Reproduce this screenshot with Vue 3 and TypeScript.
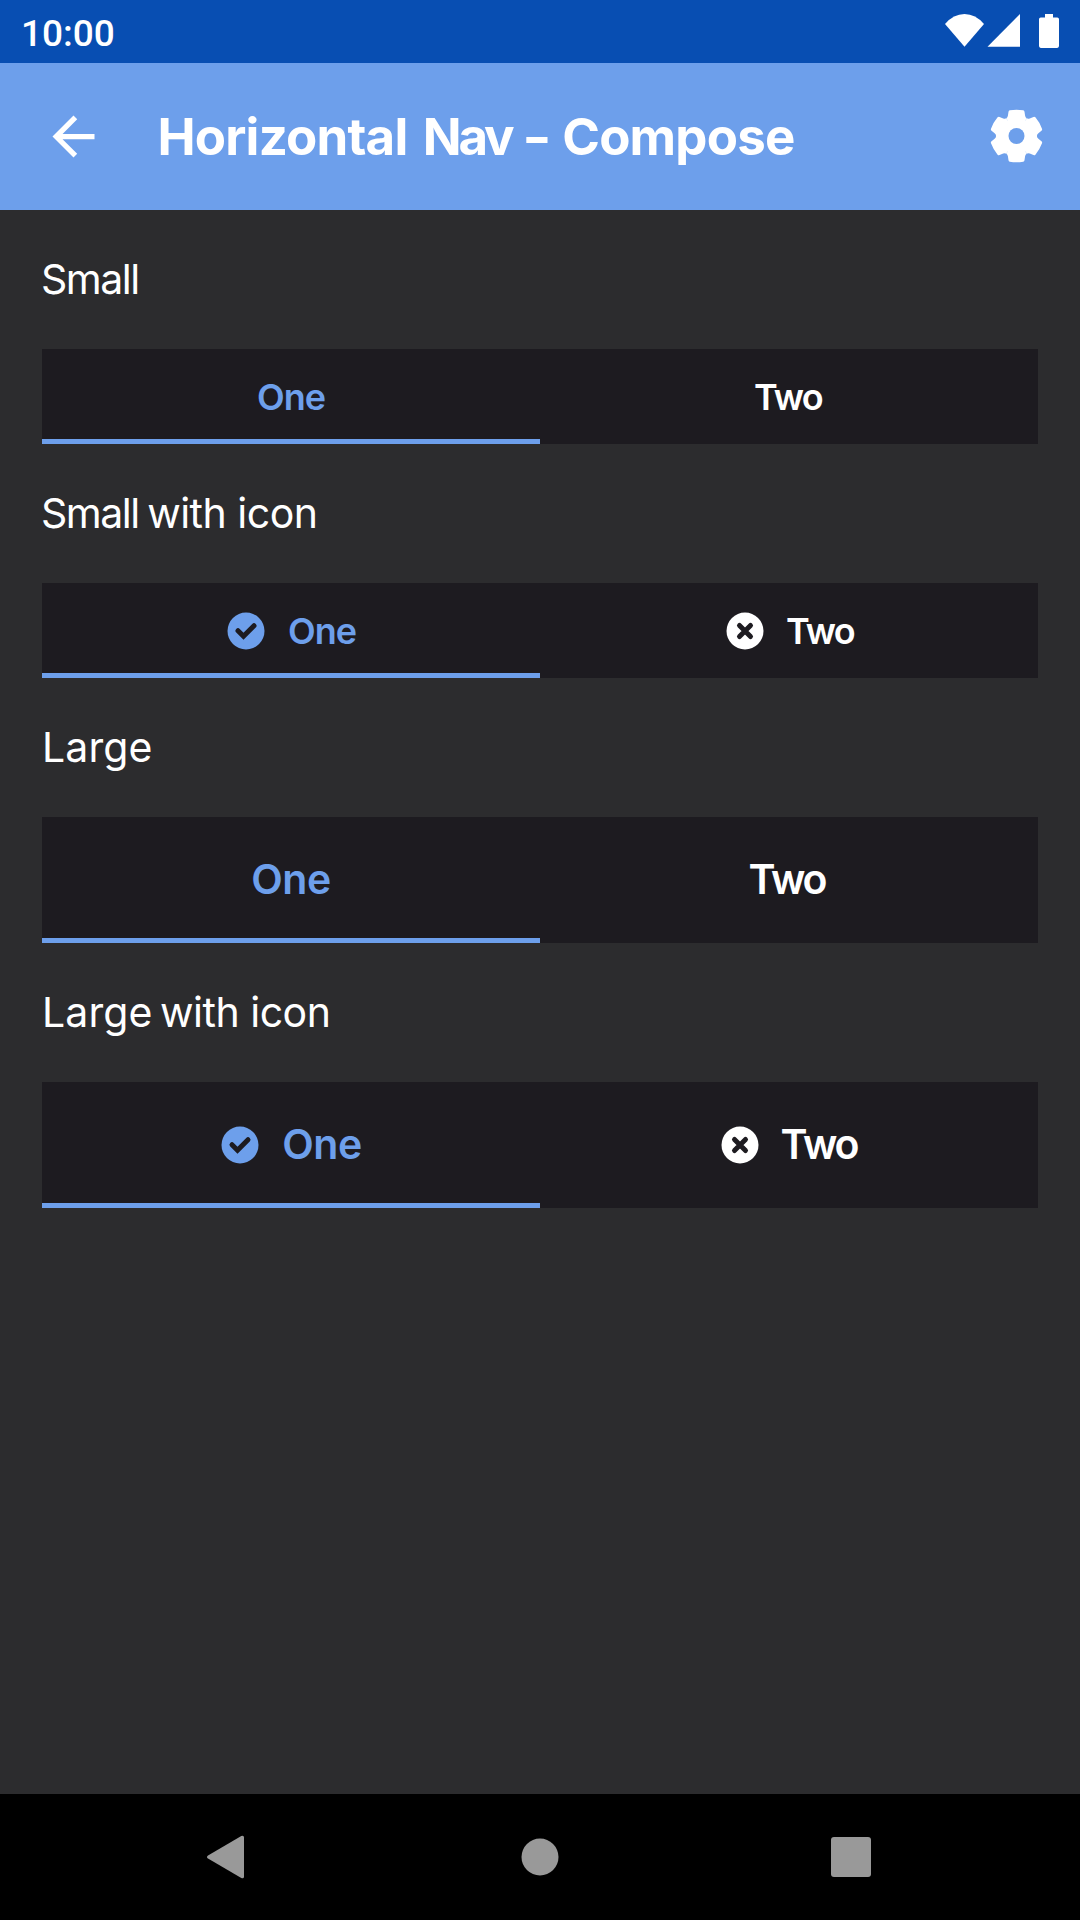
<script setup lang="ts">
interface Section {
  size: 'Small' | 'Large'
  icons: boolean
}

const sections: Section[] = [
  { size: 'Small', icons: false },
  { size: 'Small', icons: true },
  { size: 'Large', icons: false },
  { size: 'Large', icons: true },
]

const gearAngles = [0, 60, 120, 180, 240, 300]
const tooth =
  'M-10.2-17.7Q-8.9-18.4-8.6-20.3L-8-24.2Q-7.8-25.4-6.7-25.7Q0-26.9 6.7-25.7Q7.8-25.4 8-24.2L8.6-20.3Q8.9-18.4 10.2-17.7L0 0Z'
</script>

<template>
  <div class="screen">
    <header class="status">
      <span class="clock">10:00</span>
      <svg class="indicators" width="116" height="36" viewBox="944 13 116 36" fill="#fff">
        <path d="M964.5 46.7L945 24Q953.5 14 964.5 14T984 24Z" />
        <path d="M987.5 46.7H1020V14Z" />
        <path d="M1045 14h8v3.5h4.2q1.8 0 1.8 1.8v26.8q0 1.8-1.8 1.8h-16.4q-1.8 0-1.8-1.8V19.300q0-1.800 1.800-1.800h4.200z" />
      </svg>
    </header>

    <div class="appbar">
      <svg width="63" height="63" viewBox="0 0 24 24" fill="#fff">
        <path d="M20 11H7.830l5.590-5.590L12 4l-8 8 8 8 1.410-1.410L7.830 13H20v-2z" />
      </svg>
      <h1>Horizontal <span class="nav">Nav</span> <span class="dash">-</span> Compose</h1>
      <svg class="gear" width="54" height="54" viewBox="-26.500 -27 54 54" fill="#fff">
        <path v-for="a in gearAngles" :key="a" :d="tooth" :transform="`rotate(${a})`" />
        <circle r="18" />
        <circle r="8" fill="#6d9feb" />
      </svg>
    </div>

    <main>
      <section v-for="s in sections" :key="s.size + s.icons">
        <h2>
          <span :class="s.size.toLowerCase()">{{ s.size }}</span>
          <template v-if="s.icons"> with icon</template>
        </h2>
        <div class="tabs" :class="{ tall: s.size === 'Large' }">
          <div class="tab active">
            <svg v-if="s.icons" width="42" height="42" viewBox="-21 -21 42 42">
              <circle r="18.500" fill="#6d9feb" />
              <path class="mark" d="M-8-.3L-2.500 5.200 8-5.300" />
            </svg>
            <span class="one">One</span>
          </div>
          <div class="tab second">
            <svg v-if="s.icons" width="42" height="42" viewBox="-21 -21 42 42">
              <circle r="18.500" fill="#fff" />
              <path class="mark" d="M-5.500-5.500l11 11M5.500-5.500l-11 11" />
            </svg>
            <span class="two">Two</span>
          </div>
        </div>
      </section>
    </main>

    <nav class="system">
      <svg width="42" height="46" viewBox="205 1834 42 46" fill="#999">
        <path d="M208 1855.400L241.300 1836q2.700-1 2.700 1.600v38.800q0 2.600-2.700 1.600L208 1858.600q-2-1.600 0-3.200z" />
      </svg>
      <svg class="home" width="38" height="38" viewBox="-19 -19 38 38" fill="#999"><circle r="18.500" /></svg>
      <svg width="40" height="40" viewBox="0 0 40 40" fill="#999"><rect width="40" height="40" rx="3" /></svg>
    </nav>
  </div>
</template>

<style>
body {
  margin: 0;
  background: #2c2c2e;
}
</style>

<style scoped>
.screen {
  display: flex;
  flex-direction: column;
  width: 1080px;
  height: 1920px;
  overflow: hidden;
  background: #2c2c2e;
  color: #fff;
  font-family: Inter, "Liberation Sans", sans-serif;
}
svg {
  display: block;
  flex: none;
}
.status {
  display: flex;
  align-items: center;
  justify-content: space-between;
  box-sizing: border-box;
  height: 63px;
  padding: 0 20px 0 21px;
  background: #084eb2;
}
.indicators {
  margin-bottom: 1px;
}
.clock {
  font: 500 37px/63px Roboto, sans-serif;
  padding-top: 3px;
}
.appbar {
  display: flex;
  align-items: center;
  box-sizing: border-box;
  height: 147px;
  padding: 0 36px 0 42px;
  background: #6d9feb;
}
h1 {
  flex: 1;
  margin: 0 0 0 52.5px;
  font-size: 51px;
  font-weight: 650;
  line-height: 147px;
  letter-spacing: -0.8px;
  white-space: nowrap;
}
.nav {
  margin: 0 1.5px 0 4px;
  letter-spacing: -3.1px;
}
.dash {
  display: inline-block;
  margin: 0 3px 0 0.5px;
  transform: scaleX(1.25);
}
.gear {
  margin-bottom: 2px;
}
main {
  flex: 1;
  padding: 0 42px;
}
h2 {
  margin: 0;
  font-size: 41px;
  font-weight: 400;
  line-height: 139px;
  letter-spacing: -0.5px;
  white-space: nowrap;
}
.small {
  margin: 0 -2.5px 0 -1px;
  letter-spacing: -1.5px;
}
.large {
  margin-right: -3.5px;
  letter-spacing: 0.1px;
}
.tabs {
  display: flex;
  height: 95px;
  background: #1d1b20;
  font-size: 36px;
  font-weight: 600;
}
.tab {
  display: flex;
  flex: 1 1 0;
  align-items: center;
  justify-content: center;
  box-sizing: border-box;
  width: 498px;
  gap: 21px;
}
.second {
  gap: 20px;
}
.active {
  color: #6d9feb;
  box-shadow: inset 0 -5px #6d9feb;
}
.one {
  letter-spacing: -1px;
}
.one:not(:only-child) {
  margin-right: 1px;
}
.two {
  letter-spacing: -1.7px;
}
.two:only-child {
  margin-right: 2px;
}
.tall {
  height: 126px;
  font-size: 41px;
}
.tall .one {
  padding-bottom: 2px;
  letter-spacing: -0.5px;
}
.tall .two {
  padding: 0 2px 2px 0;
  letter-spacing: -2.1px;
}
.mark {
  fill: none;
  stroke: #1d1b20;
  stroke-width: 5;
  stroke-linecap: round;
}
.system {
  display: flex;
  align-items: center;
  justify-content: space-between;
  box-sizing: border-box;
  height: 126px;
  padding: 0 209px 0 205px;
  background: #000;
}
.home {
  margin-left: 2px;
}
</style>
